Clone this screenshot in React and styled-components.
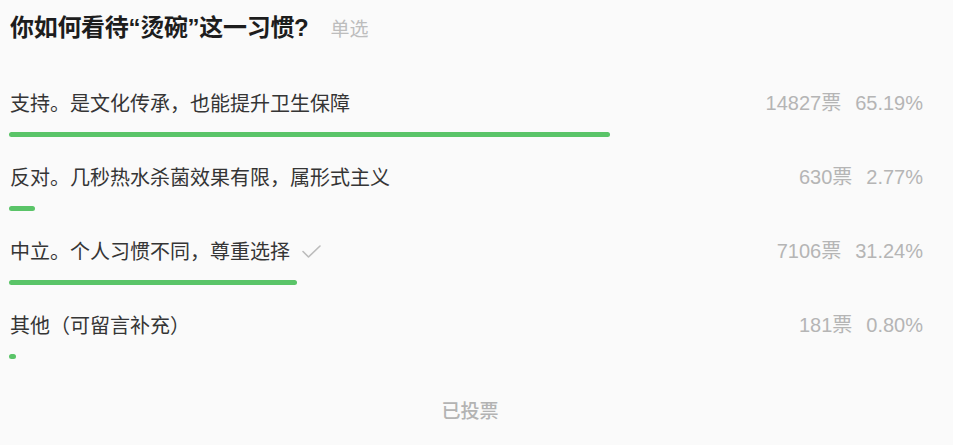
import React from "react";
import styled, { createGlobalStyle } from "styled-components";

const options = [
  { id: 1, text: "支持。是文化传承，也能提升卫生保障", votes: 14827, pct: 65.19 },
  { id: 2, text: "反对。几秒热水杀菌效果有限，属形式主义", votes: 630, pct: 2.77 },
  { id: 3, text: "中立。个人习惯不同，尊重选择", votes: 7106, pct: 31.24, mine: true },
  { id: 4, text: "其他（可留言补充）", votes: 181, pct: 0.8 },
];

const GlobalStyle = createGlobalStyle`
  html, body {
    margin: 0;
    padding: 0;
    background: #ffffff;
  }
  body {
    font-family: "Liberation Sans", "Noto Sans CJK SC", sans-serif;
  }
`;

const Check = () => (
  <svg width="19" height="13" viewBox="0 0 19 13" fill="none">
    <path d="M1 6.5 L6.5 12 L18 1" stroke="#bcbcbc" strokeWidth="1.6" strokeLinecap="round" strokeLinejoin="round" />
  </svg>
);

const App = () => {
  return (
    <>
      <GlobalStyle />
      <Wrapper>
        <Header>
          <Title>你如何看待“烫碗”这一习惯?</Title>
          <Kind>单选</Kind>
        </Header>
        <List>
          {options.map((opt) => (
            <Row key={opt.id}>
              <Line>
                <Label>
                  {opt.text}
                  {opt.mine && <Check />}
                </Label>
                <Stats>
                  <span>{opt.votes}票</span>
                  <span>{opt.pct.toFixed(2)}%</span>
                </Stats>
              </Line>
              <Track>
                <Bar style={{ width: `${opt.pct}%` }} />
              </Track>
            </Row>
          ))}
        </List>
        <Footer>已投票</Footer>
      </Wrapper>
    </>
  );
};

const Wrapper = styled.div`
  width: 953px;
  height: 445px;
  box-sizing: border-box;
  background: #fafafa;
  padding: 12px 30px 0 9px;
`;

const Header = styled.div`
  display: flex;
  align-items: center;
  gap: 22px;
  height: 32px;
  padding-left: 1px;
`;

const Title = styled.h1`
  margin: 0;
  font-family: "Liberation Sans", "Noto Sans CJK SC", sans-serif;
  font-size: 24px;
  font-weight: 700;
  line-height: 32px;
  color: #1d1d1d;
  letter-spacing: -0.3px;
`;

const Kind = styled.span`
  font-family: "Noto Sans CJK SC", sans-serif;
  font-size: 19px;
  line-height: 32px;
  color: #bdbdbd;
`;

const List = styled.div`
  display: flex;
  flex-direction: column;
  margin-top: 45px;
`;

const Row = styled.div`
  display: flex;
  flex-direction: column;
  height: 74px;
`;

const Line = styled.div`
  display: flex;
  justify-content: space-between;
  align-items: center;
  height: 28px;
`;

const Label = styled.div`
  display: flex;
  align-items: center;
  gap: 12px;
  padding-left: 1px;
  font-family: "Noto Sans CJK SC", sans-serif;
  font-size: 20px;
  line-height: 28px;
  color: #353535;
`;

const Stats = styled.div`
  display: flex;
  align-items: baseline;
  gap: 14px;
  font-size: 20px;
  line-height: 28px;
  color: #b5b5b5;
  font-family: "Liberation Sans", "Noto Sans CJK SC", sans-serif;
`;

const Track = styled.div`
  margin-top: 15px;
  margin-right: -8px;
  height: 5px;
`;

const Bar = styled.div`
  height: 100%;
  border-radius: 3px;
  background: #5ac468;
`;

const Footer = styled.div`
  margin-top: 11px;
  padding-left: 8px;
  text-align: center;
  font-family: "Noto Sans CJK SC", sans-serif;
  font-size: 19px;
  font-weight: 500;
  line-height: 28px;
  color: #b3b3b3;
`;

export default App;
